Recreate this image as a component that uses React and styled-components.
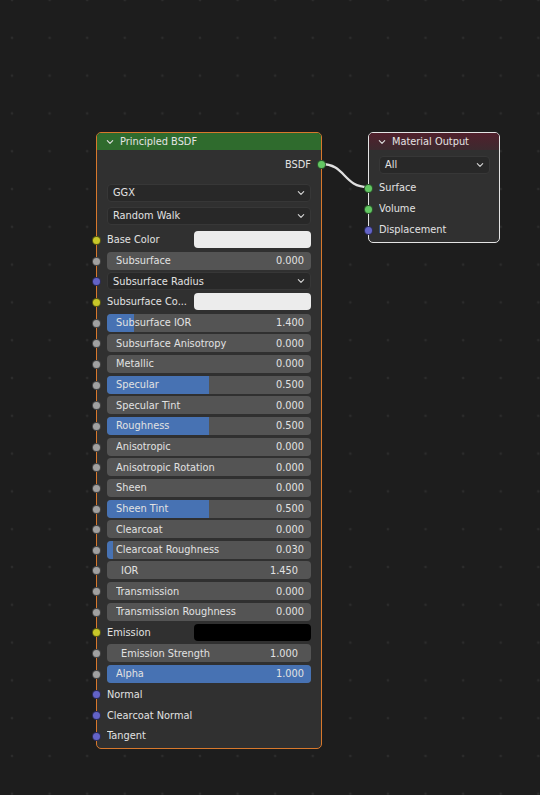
import React from 'react';
import styled, { createGlobalStyle } from 'styled-components';

const Global = createGlobalStyle`
  html, body { margin: 0; padding: 0; }
  body {
    background: #1d1d1d;
    width: 540px;
    height: 795px;
    overflow: hidden;
    font-family: "DejaVu Sans", "Liberation Sans", sans-serif;
    -webkit-font-smoothing: antialiased;
  }
`;

const Canvas = styled.div`
  position: relative;
  width: 540px;
  height: 795px;
  background-color: #1d1d1d;
  background-image: radial-gradient(circle, #2c2c2c 1px, transparent 1.7px);
  background-size: 37.6px 37.8px;
  background-position: -6.8px -18.9px;
  overflow: hidden;
`;

const Wires = styled.svg`
  position: absolute;
  left: 0;
  top: 0;
  pointer-events: none;
`;

const Node = styled.div`
  position: absolute;
  left: ${p => p.$x}px;
  top: ${p => p.$y}px;
  width: ${p => p.$w}px;
  box-sizing: border-box;
  background: #303030;
  border: 1px solid ${p => p.$border};
  border-radius: 5px;
  color: #e2e2e2;
  font-size: 9.8px;
`;

const Header = styled.div`
  height: 17px;
  display: flex;
  align-items: center;
  gap: 6px;
  padding-left: 9px;
  border-radius: 4px 4px 0 0;
  background: ${p => p.$bg};
  color: #e4e4e4;
  font-size: 9.8px;
`;

const Body = styled.div`
  display: flex;
  flex-direction: column;
  padding: ${p => p.$pad};
`;

const Row = styled.div`
  position: relative;
  height: ${p => p.$h || 20.667}px;
  margin-top: ${p => p.$mt || 0}px;
  display: flex;
  align-items: center;
  justify-content: ${p => (p.$right ? 'flex-end' : 'flex-start')};
  gap: 4px;
  padding: 0 ${p => p.$pr || 10}px 0 10px;
  white-space: nowrap;
`;

const Socket = styled.span`
  position: absolute;
  top: 50%;
  ${p => (p.$out ? 'right: -5px;' : 'left: -5px;')}
  width: 7px;
  height: 7px;
  margin-top: -4px;
  border-radius: 50%;
  background: ${p => p.$c};
  border: 0.5px solid rgba(0, 0, 0, 0.55);
`;

const Label = styled.span`
  flex: 1;
  position: relative;
  z-index: 1;
  overflow: hidden;
`;

const Slider = styled.div`
  position: relative;
  flex: 1;
  height: 18px;
  box-sizing: border-box;
  border-radius: 4px;
  background: #545454;
  overflow: hidden;
  display: flex;
  align-items: center;
  padding: 0 ${p => (p.$num ? 13 : 7)}px 0 ${p => (p.$num ? 14 : 9)}px;
`;

const Fill = styled.div`
  position: absolute;
  left: 0;
  top: 0;
  bottom: 0;
  background: #4772b3;
`;

const Value = styled.span`
  position: relative;
  z-index: 1;
`;

const Swatch = styled.div`
  flex: 0 0 117px;
  height: 17px;
  border-radius: 4px;
  background: ${p => p.$c};
`;

const Dropdown = styled.div`
  flex: 1;
  height: 18px;
  box-sizing: border-box;
  border-radius: 4px;
  background: #282828;
  border: 1px solid #373737;
  display: flex;
  align-items: center;
  justify-content: space-between;
  padding: 0 5px 0 5px;
  color: #e2e2e2;
`;

const Chevron = ({ color = '#d8d8d8', size = 8 }) => (
  <svg width={size} height={size} viewBox="0 0 8 8">
    <polyline points="1.3,2.6 4,5.3 6.7,2.6" fill="none" stroke={color} strokeWidth="1.1" strokeLinecap="round" strokeLinejoin="round" />
  </svg>
);

const YELLOW = '#c7c729';
const GREY = '#a1a1a1';
const PURPLE = '#6363c7';
const GREEN = '#63c763';

const rows = [
  { t: 'color', label: 'Base Color', c: '#ececec', s: YELLOW },
  { t: 'slider', label: 'Subsurface', v: '0.000', f: 0 },
  { t: 'menu', label: 'Subsurface Radius', s: PURPLE },
  { t: 'color', label: 'Subsurface Co...', c: '#ececec', s: YELLOW },
  { t: 'slider', label: 'Subsurface IOR', v: '1.400', f: 0.13 },
  { t: 'slider', label: 'Subsurface Anisotropy', v: '0.000', f: 0 },
  { t: 'slider', label: 'Metallic', v: '0.000', f: 0 },
  { t: 'slider', label: 'Specular', v: '0.500', f: 0.5 },
  { t: 'slider', label: 'Specular Tint', v: '0.000', f: 0 },
  { t: 'slider', label: 'Roughness', v: '0.500', f: 0.5 },
  { t: 'slider', label: 'Anisotropic', v: '0.000', f: 0 },
  { t: 'slider', label: 'Anisotropic Rotation', v: '0.000', f: 0 },
  { t: 'slider', label: 'Sheen', v: '0.000', f: 0 },
  { t: 'slider', label: 'Sheen Tint', v: '0.500', f: 0.5 },
  { t: 'slider', label: 'Clearcoat', v: '0.000', f: 0 },
  { t: 'slider', label: 'Clearcoat Roughness', v: '0.030', f: 0.03 },
  { t: 'num', label: 'IOR', v: '1.450' },
  { t: 'slider', label: 'Transmission', v: '0.000', f: 0 },
  { t: 'slider', label: 'Transmission Roughness', v: '0.000', f: 0 },
  { t: 'color', label: 'Emission', c: '#000000', s: YELLOW },
  { t: 'num', label: 'Emission Strength', v: '1.000' },
  { t: 'slider', label: 'Alpha', v: '1.000', f: 1 },
  { t: 'plain', label: 'Normal', s: PURPLE },
  { t: 'plain', label: 'Clearcoat Normal', s: PURPLE },
  { t: 'plain', label: 'Tangent', s: PURPLE },
];

const InputRow = ({ r }) => {
  const sock = r.s || GREY;
  let content;
  if (r.t === 'color') {
    content = (
      <>
        <Label>{r.label}</Label>
        <Swatch $c={r.c} />
      </>
    );
  } else if (r.t === 'slider' || r.t === 'num') {
    content = (
      <Slider $num={r.t === 'num'}>
        {r.f > 0 && <Fill style={{ width: `${r.f * 100}%` }} />}
        <Label>{r.label}</Label>
        <Value>{r.v}</Value>
      </Slider>
    );
  } else if (r.t === 'menu') {
    content = (
      <Dropdown>
        <span>{r.label}</span>
        <Chevron />
      </Dropdown>
    );
  } else {
    content = <Label>{r.label}</Label>;
  }
  return (
    <Row>
      <Socket $c={sock} />
      {content}
    </Row>
  );
};

export default function App() {
  return (
    <>
      <Global />
      <Canvas>
        <Wires width="540" height="795" viewBox="0 0 540 795">
          <path d="M321 164 C 346 164, 343 187, 368 187" fill="none" stroke="#e0e0e0" strokeWidth="2.3" />
        </Wires>

        <Node $x={96} $y={132} $w={226} $border="#d7782c">
          <Header $bg="#2f6b2d">
            <Chevron color="#e0e0e0" />
            <span>Principled BSDF</span>
          </Header>
          <Body $pad="4px 0 2px 0">
            <Row $right>
              <span>BSDF</span>
              <Socket $out $c={GREEN} />
            </Row>
            <Row $h={23} $mt={6.7}>
              <Dropdown>
                <span>GGX</span>
                <Chevron />
              </Dropdown>
            </Row>
            <Row $h={23}>
              <Dropdown>
                <span>Random Walk</span>
                <Chevron />
              </Dropdown>
            </Row>
            <Row $h={2.3} />
            {rows.map(r => (
              <InputRow key={r.label} r={r} />
            ))}
          </Body>
        </Node>

        <Node $x={368} $y={132} $w={132} $border="#e4e4e4">
          <Header $bg="linear-gradient(#51202c, #3c2a2f)">
            <Chevron color="#e0e0e0" />
            <span>Material Output</span>
          </Header>
          <Body $pad="4px 0 2px 0">
            <Row $h={21} $pr={9}>
              <Dropdown>
                <span>All</span>
                <Chevron />
              </Dropdown>
            </Row>
            <Row $h={2.2} />
            <Row $h={21}>
              <Socket $c={GREEN} />
              <Label>Surface</Label>
            </Row>
            <Row $h={21}>
              <Socket $c={GREEN} />
              <Label>Volume</Label>
            </Row>
            <Row $h={21}>
              <Socket $c={PURPLE} />
              <Label>Displacement</Label>
            </Row>
          </Body>
        </Node>
      </Canvas>
    </>
  );
}
